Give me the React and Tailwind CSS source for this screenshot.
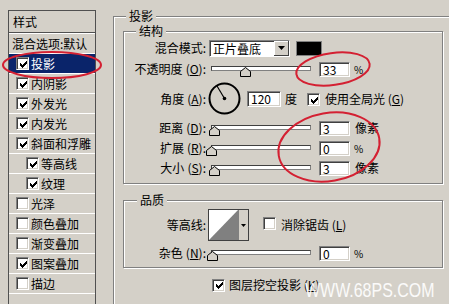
import React from 'react'

const styleRows = [
  { name: '投影', on: true, selected: true },
  { name: '内阴影', on: true },
  { name: '外发光', on: true },
  { name: '内发光', on: true },
  { name: '斜面和浮雕', on: true },
  { name: '等高线', on: true, indent: true },
  { name: '纹理', on: true, indent: true },
  { name: '光泽', on: false },
  { name: '颜色叠加', on: false },
  { name: '渐变叠加', on: false },
  { name: '图案叠加', on: true },
  { name: '描边', on: false },
]

function Check({ on }) {
  return (
    <span className="inline-flex h-[13px] w-[13px] shrink-0 items-center justify-center border border-[#808080] border-b-white border-r-white bg-white shadow-[inset_1px_1px_0_#404040,inset_-1px_-1px_0_#d4d0c8]">
      {on && (
        <svg width="7" height="7" viewBox="0 0 7 7" shapeRendering="crispEdges" className="ml-[1px] mt-[1px]">
          <path d="M0 2h1v1h1v1h1v-1h1v-1h1v-1h1v-1h1v3h-1v1h-1v1h-1v1h-1v1h-1v-1h-1v-1h-1v-1h-1z" fill="#000" />
        </svg>
      )}
    </span>
  )
}

function Field({ value, w = 'w-[31px]', h = 'h-[15px]' }) {
  return (
    <div className={`${w} ${h} border border-[#808080] border-b-white border-r-white bg-white pl-[3px] text-[12px] leading-[13px] shadow-[inset_1px_1px_0_#404040,inset_-1px_-1px_0_#d4d0c8]`}>
      {value}
    </div>
  )
}

function Slider({ thumb }) {
  return (
    <div className="relative ml-[5px] h-[16px] w-[100px]">
      <div className="absolute left-0 right-0 top-[5px] h-[5px] border border-[#404040] border-b-[#808080] border-r-[#808080] bg-white" />
      <svg width="11" height="10" viewBox="0 0 11 10" className="absolute top-[6px]" style={{ left: thumb }}>
        <path d="M0.5 9.5 L10.5 9.5 L10.5 4.5 L5.5 0.5 L0.5 4.5 Z" fill="#d4d0c8" stroke="#000" />
      </svg>
    </div>
  )
}

function Label({ children }) {
  return <div className="w-[82px] shrink-0 text-right">{children}</div>
}

function Legend({ children, className }) {
  return (
    <div className={`absolute -top-[9px] bg-[#d4d0c8] px-[3px] leading-[16px] ${className}`}>{children}</div>
  )
}

function Key({ k }) {
  return (
    <span className="ml-[3px]">
      (<span className="underline">{k}</span>):
    </span>
  )
}

export default function App() {
  return (
    <div className="relative flex h-[304px] w-[449px] overflow-hidden bg-[#d4d0c8] font-['Noto_Sans_CJK_SC','Noto_Sans',sans-serif] text-[12px] text-black">
      {/* style list */}
      <div className="ml-[8px] mt-[10px] h-[300px] w-[88px] shrink-0 border border-b-0 border-[#505050]">
        <div className="h-[21px] pl-[4px] leading-[21px]">样式</div>
        <div className="h-[2px] border-t border-b border-t-[#505050] border-b-white" />
        <div className="h-[20px] border-b border-white pl-[3px] leading-[19px] whitespace-nowrap">混合选项:默认</div>
        {styleRows.map((r) => (
          <div
            key={r.name}
            className={`flex h-[20px] items-center border-b border-white ${r.indent ? 'pl-[17px]' : 'pl-[7px]'} ${r.selected ? 'bg-[#0a246a] text-white' : ''}`}
          >
            <Check on={r.on} />
            <span className="ml-[2px] whitespace-nowrap">{r.name}</span>
          </div>
        ))}
      </div>

      {/* drop shadow settings */}
      <div className="relative ml-[17px] mt-[16px] h-[320px] flex-1 border-l border-t border-[#808080] pl-[9px] pt-[14px] shadow-[inset_1px_1px_0_#fff]">
        <Legend className="left-[12px]">投影</Legend>

        <div className="relative h-[153px] w-[320px] border border-[#808080] pt-[8px] shadow-[inset_1px_1px_0_#fff,1px_1px_0_#fff]">
          <Legend className="left-[12px]">结构</Legend>

          <div className="flex h-[16px] items-center">
            <Label>混合模式:</Label>
            <div className="ml-[3px] flex h-[17px] w-[81px] border border-[#808080] border-b-white border-r-white bg-white shadow-[inset_1px_1px_0_#404040]">
              <span className="flex-1 pl-[3px] leading-[15px]">正片叠底</span>
              <div className="flex h-[15px] w-[15px] items-center justify-center bg-[#d4d0c8] shadow-[inset_-1px_-1px_0_#404040,inset_1px_1px_0_#fff]">
                <svg width="7" height="4" viewBox="0 0 7 4"><path d="M0 0h7L3.5 4z" fill="#000" /></svg>
              </div>
            </div>
            <div className="ml-[6px] h-[15px] w-[26px] border border-[#808080] bg-black" />
          </div>

          <div className="mt-[5px] flex h-[16px] items-center">
            <Label>不透明度<Key k="O" /></Label>
            <Slider thumb={29} />
            <div className="ml-[8px]"><Field value="33" /></div>
            <span className="ml-[4px] text-[10px]">%</span>
          </div>

          <div className="mt-[6px] flex h-[31px] items-center">
            <Label>角度<Key k="A" /></Label>
            <svg width="33" height="33" viewBox="0 0 33 33" className="ml-[2px]">
              <circle cx="16.5" cy="16.5" r="15" fill="none" stroke="#000" strokeWidth="2" />
              <line x1="16.5" y1="16.5" x2="9" y2="4" stroke="#000" strokeWidth="1.2" />
              <circle cx="16.5" cy="16.5" r="1.8" fill="#000" />
            </svg>
            <div className="ml-[6px]"><Field value="120" w="w-[34px]" h="h-[16px]" /></div>
            <span className="ml-[4px]">度</span>
            <span className="ml-[10px]"><Check on /></span>
            <span className="ml-[5px] whitespace-nowrap">使用全局光 (<span className="underline">G</span>)</span>
          </div>

          <div className="mt-[6px] flex h-[16px] items-center">
            <Label>距离<Key k="D" /></Label>
            <Slider thumb={-2} />
            <div className="ml-[8px]"><Field value="3" /></div>
            <span className="ml-[5px]">像素</span>
          </div>

          <div className="mt-[4px] flex h-[16px] items-center">
            <Label>扩展<Key k="R" /></Label>
            <Slider thumb={-5} />
            <div className="ml-[8px]"><Field value="0" /></div>
            <span className="ml-[4px] text-[10px]">%</span>
          </div>

          <div className="mt-[4px] flex h-[16px] items-center">
            <Label>大小<Key k="S" /></Label>
            <Slider thumb={-2} />
            <div className="ml-[8px]"><Field value="3" /></div>
            <span className="ml-[5px]">像素</span>
          </div>
        </div>

        <div className="relative mt-[16px] h-[68px] w-[320px] border border-[#808080] pt-[8px] shadow-[inset_1px_1px_0_#fff,1px_1px_0_#fff]">
          <Legend className="left-[13px]">品质</Legend>

          <div className="flex h-[32px] items-center">
            <Label>等高线:</Label>
            <div className="ml-[2px] flex h-[32px] w-[41px] border border-[#404040] bg-white">
              <svg width="29" height="30" viewBox="0 0 29 30" className="shrink-0">
                <path d="M0 30 L29 0 L29 30 Z" fill="#808080" />
              </svg>
              <div className="flex flex-1 items-center justify-center border-l border-[#808080] bg-[#d4d0c8]">
                <svg width="5" height="3" viewBox="0 0 5 3"><path d="M0 0h5L2.5 3z" fill="#000" /></svg>
              </div>
            </div>
            <span className="ml-[14px]"><Check on={false} /></span>
            <span className="ml-[5px] whitespace-nowrap">消除锯齿 (<span className="underline">L</span>)</span>
          </div>

          <div className="mt-[4px] flex h-[16px] items-center">
            <Label>杂色<Key k="N" /></Label>
            <Slider thumb={-4} />
            <div className="ml-[8px]"><Field value="0" /></div>
            <span className="ml-[4px] text-[10px]">%</span>
          </div>
        </div>

        <div className="ml-[89px] mt-[8px] flex items-center">
          <Check on />
          <span className="ml-[4px] whitespace-nowrap">图层挖空投影 (<span className="underline">K</span>)</span>
        </div>
      </div>

      {/* red marks drawn over the screenshot */}
      <svg width="449" height="304" className="pointer-events-none absolute left-0 top-0">
        <ellipse cx="52" cy="65" rx="49" ry="13" fill="none" stroke="#d42032" strokeWidth="2" />
        <ellipse cx="333" cy="69" rx="37" ry="16" fill="none" stroke="#d42032" strokeWidth="2" transform="rotate(-8 333 69)" />
        <ellipse cx="329" cy="147" rx="51" ry="34" fill="none" stroke="#d42032" strokeWidth="2" transform="rotate(-10 329 147)" />
      </svg>

      <div className="pointer-events-none absolute left-[305px] top-[278px] origin-left scale-x-[0.76] whitespace-nowrap font-['Liberation_Sans',sans-serif] text-[21px] leading-[24px] text-white/90">
        WWW.68PS.COM
      </div>
    </div>
  )
}
